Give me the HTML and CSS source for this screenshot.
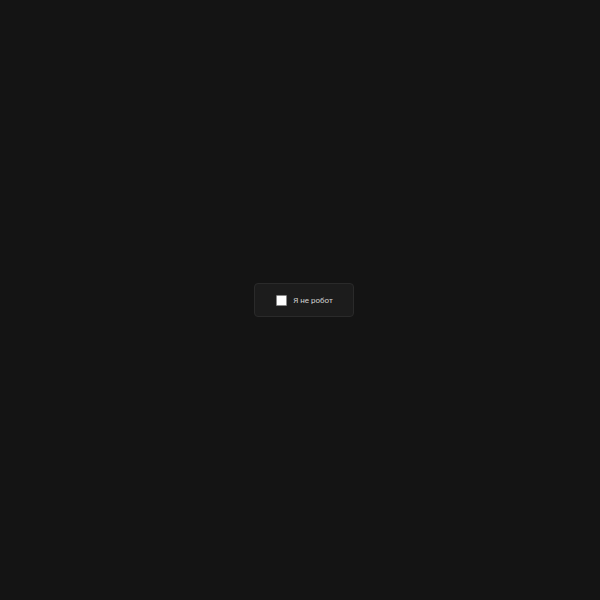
FILE: index.html
```html
<!DOCTYPE html>
<html lang="ru">
<head>
<meta charset="utf-8">
<link rel="stylesheet" href="styles.css">
</head>
<body>
<main class="page">
  <label class="captcha">
    <span class="box"></span>
    <span class="label">Я не робот</span>
  </label>
</main>
</body>
</html>
```
FILE: styles.css
```css
html, body {
  margin: 0;
  padding: 0;
  background: #141414;
  height: 100%;
}
.page {
  height: 600px;
  display: flex;
  align-items: center;
  justify-content: center;
  padding-left: 8px;
  box-sizing: border-box;
}
.captcha {
  display: flex;
  align-items: center;
  gap: 6px;
  height: 34px;
  box-sizing: border-box;
  padding: 0 20px 0 21px;
  background: #1c1c1c;
  border: 1px solid #2a2a2a;
  border-radius: 4px;
  font-family: Roboto, "Liberation Sans", sans-serif;
  font-size: 8px;
  color: #d2d2d2;
}
.box {
  width: 11px;
  height: 11px;
  box-sizing: border-box;
  background: #fff;
  border: 1px solid #888;
  border-radius: 1px;
}
```
